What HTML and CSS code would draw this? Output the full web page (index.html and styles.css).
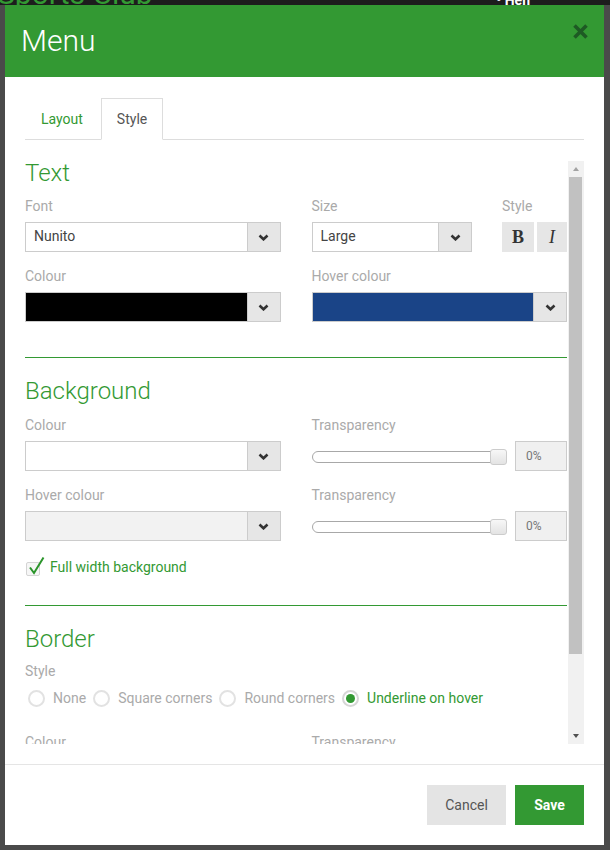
FILE: index.html
```html
<!DOCTYPE html>
<html lang="en">
<head>
    <meta charset="UTF-8">
    <meta name="viewport" content="width=device-width, initial-scale=1.0">
    <title>Sports Club - Menu style</title>
    <link rel="stylesheet" href="styles.css">
</head>
<body>
    <div class="site-head">
        <span class="site-name">Sports Club</span>
        <span class="site-nav">&bull; Hen</span>
    </div>

    <div class="modal">
        <div class="modal-header">
            <h2>Menu</h2>
            <button class="close" type="button" aria-label="Close">
                <svg width="17" height="17" viewBox="0 0 17 17">
                    <path d="M2.5 2.5 L14.5 14.5 M14.5 2.5 L2.5 14.5" stroke="currentColor" stroke-width="3.6" fill="none"/>
                </svg>
            </button>
        </div>

        <div class="modal-body">
            <ul class="tabs">
                <li><a href="#">Layout</a></li>
                <li class="active"><a href="#">Style</a></li>
            </ul>

            <div class="scroll">
                <div class="pane">
                    <!-- Text -->
                    <h3 class="section-title">Text</h3>
                    <div class="form-row">
                        <div class="field">
                            <div class="field-label">Font</div>
                            <div class="select">
                                <span class="select-value">Nunito</span>
                                <span class="select-caret"><svg width="11" height="7" viewBox="0 0 11 7"><path d="M1.5 1.5 L5.5 5.3 L9.5 1.5" stroke="#333" stroke-width="2.6" fill="none"/></svg></span>
                            </div>
                        </div>
                        <div class="pair">
                            <div class="field grow">
                                <div class="field-label">Size</div>
                                <div class="select">
                                    <span class="select-value">Large</span>
                                    <span class="select-caret"><svg width="11" height="7" viewBox="0 0 11 7"><path d="M1.5 1.5 L5.5 5.3 L9.5 1.5" stroke="#333" stroke-width="2.6" fill="none"/></svg></span>
                                </div>
                            </div>
                            <div class="field style-field">
                                <div class="field-label">Style</div>
                                <div class="style-btns">
                                    <span class="style-btn bold">B</span>
                                    <span class="style-btn italic">I</span>
                                </div>
                            </div>
                        </div>
                    </div>
                    <div class="form-row">
                        <div class="field">
                            <div class="field-label">Colour</div>
                            <div class="select">
                                <span class="select-value swatch-black"></span>
                                <span class="select-caret"><svg width="11" height="7" viewBox="0 0 11 7"><path d="M1.5 1.5 L5.5 5.3 L9.5 1.5" stroke="#333" stroke-width="2.6" fill="none"/></svg></span>
                            </div>
                        </div>
                        <div class="field">
                            <div class="field-label">Hover colour</div>
                            <div class="select">
                                <span class="select-value swatch-blue"></span>
                                <span class="select-caret"><svg width="11" height="7" viewBox="0 0 11 7"><path d="M1.5 1.5 L5.5 5.3 L9.5 1.5" stroke="#333" stroke-width="2.6" fill="none"/></svg></span>
                            </div>
                        </div>
                    </div>

                    <hr class="divider">

                    <!-- Background -->
                    <h3 class="section-title">Background</h3>
                    <div class="form-row roomy">
                        <div class="field">
                            <div class="field-label">Colour</div>
                            <div class="select">
                                <span class="select-value"></span>
                                <span class="select-caret"><svg width="11" height="7" viewBox="0 0 11 7"><path d="M1.5 1.5 L5.5 5.3 L9.5 1.5" stroke="#333" stroke-width="2.6" fill="none"/></svg></span>
                            </div>
                        </div>
                        <div class="field">
                            <div class="field-label">Transparency</div>
                            <div class="slider-row">
                                <div class="slider"><span class="slider-thumb"></span></div>
                                <span class="slider-value">0%</span>
                            </div>
                        </div>
                    </div>
                    <div class="form-row">
                        <div class="field">
                            <div class="field-label">Hover colour</div>
                            <div class="select disabled">
                                <span class="select-value"></span>
                                <span class="select-caret"><svg width="11" height="7" viewBox="0 0 11 7"><path d="M1.5 1.5 L5.5 5.3 L9.5 1.5" stroke="#333" stroke-width="2.6" fill="none"/></svg></span>
                            </div>
                        </div>
                        <div class="field">
                            <div class="field-label">Transparency</div>
                            <div class="slider-row">
                                <div class="slider"><span class="slider-thumb"></span></div>
                                <span class="slider-value">0%</span>
                            </div>
                        </div>
                    </div>
                    <label class="check">
                        <span class="check-box">
                            <svg class="check-mark" width="17" height="19" viewBox="0 0 17 19"><path d="M2 11.5 L6 17 L15.5 1.5" stroke="#2b952b" stroke-width="2" fill="none"/></svg>
                        </span>
                        Full width background
                    </label>

                    <hr class="divider bg-end">

                    <!-- Border -->
                    <h3 class="section-title">Border</h3>
                    <div class="field-label spaced">Style</div>
                    <div class="radios">
                        <label class="radio"><span class="radio-dot"></span>None</label>
                        <label class="radio"><span class="radio-dot"></span>Square corners</label>
                        <label class="radio"><span class="radio-dot"></span>Round corners</label>
                        <label class="radio checked"><span class="radio-dot"></span>Underline on hover</label>
                    </div>
                    <div class="form-row last">
                        <div class="field">
                            <div class="field-label">Colour</div>
                        </div>
                        <div class="field">
                            <div class="field-label">Transparency</div>
                        </div>
                    </div>
                </div>

                <div class="scrollbar">
                    <span class="scroll-btn up"></span>
                    <div class="scroll-track"><div class="scroll-thumb"></div></div>
                    <span class="scroll-btn down"></span>
                </div>
            </div>
        </div>

        <div class="modal-footer">
            <button class="btn btn-cancel" type="button">Cancel</button>
            <button class="btn btn-save" type="button">Save</button>
        </div>
    </div>
</body>
</html>
```

FILE: styles.css
```css
* {
    box-sizing: border-box;
}

body {
    margin: 0;
    height: 850px;
    overflow: hidden;
    font-family: 'Roboto', 'Liberation Sans', sans-serif;
    font-size: 14px;
    line-height: 20px;
    color: #555;
    background-color: #4a4a4a;
}

/* page behind the dialog */
.site-head {
    height: 5px;
    overflow: hidden;
    display: flex;
    align-items: flex-end;
    justify-content: space-between;
    padding-right: 80px;
    background-color: #1d1d1d;
}

.site-name {
    color: #339933;
    font-size: 30px;
    line-height: 22px;
    white-space: nowrap;
    margin-left: -3px;
}

.site-nav {
    color: #fff;
    font-weight: bold;
    line-height: 10px;
}

/* dialog */
.modal {
    position: absolute;
    top: 5px;
    left: 5px;
    width: 599px;
    height: 840px;
    display: flex;
    flex-direction: column;
    background-color: #fff;
}

.modal-header {
    position: relative;
    height: 73px;
    padding: 0 16px;
    display: flex;
    align-items: center;
    background-color: #339933;
}

.modal-header h2 {
    margin: 0;
    font-size: 30px;
    line-height: 34px;
    font-weight: 300;
    color: #fff;
}

.close {
    position: absolute;
    top: 18px;
    right: 15px;
    width: 17px;
    height: 17px;
    padding: 0;
    border: none;
    background: none;
    color: #1e5a24;
    cursor: pointer;
}

.close svg {
    display: block;
}

.modal-body {
    padding: 21px 20px 20px;
}

/* tabs */
.tabs {
    list-style: none;
    margin: 0;
    padding: 0;
    display: flex;
    border-bottom: 1px solid #ddd;
}

.tabs li {
    margin-bottom: -1px;
    margin-right: 2px;
}

.tabs a {
    display: block;
    padding: 10px 15px;
    line-height: 20px;
    border: 1px solid transparent;
    color: #339933;
    text-decoration: none;
}

.tabs .active a {
    color: #555;
    background-color: #fff;
    border-color: #ddd #ddd transparent;
}

/* scrolling area */
.scroll {
    display: flex;
    gap: 1px;
    height: 585px;
    margin-top: 19px;
}

.pane {
    width: 542px;
    overflow: hidden;
}

.scrollbar {
    width: 16px;
    margin-top: 2px;
    display: flex;
    flex-direction: column;
    background-color: #f1f1f1;
}

.scroll-btn {
    height: 16px;
    display: flex;
    align-items: center;
    justify-content: center;
}

.scroll-btn::before {
    content: '';
    border-left: 3.5px solid transparent;
    border-right: 3.5px solid transparent;
}

.scroll-btn.up::before {
    border-bottom: 4px solid #a3a3a3;
}

.scroll-btn.down::before {
    border-top: 4px solid #505050;
}

.scroll-track {
    flex: 1;
    padding: 0 2px 0 1px;
}

.scroll-thumb {
    height: 477px;
    background-color: #c1c1c1;
}

/* form */
.section-title {
    margin: 0;
    font-size: 24px;
    line-height: 28px;
    font-weight: 300;
    color: #339933;
}

.form-row {
    display: grid;
    grid-template-columns: 1fr 1fr;
    column-gap: 31px;
    margin-top: 14px;
}

.section-title + .form-row {
    margin-top: 9px;
}

.field-label.spaced {
    margin-top: 8px;
}

.section-title + .form-row.roomy {
    margin-top: 10px;
}

.form-row.last {
    margin-top: 23px;
}

.field-label {
    line-height: 20px;
    margin-bottom: 6px;
    color: #aaa;
}

.pair {
    display: flex;
    gap: 30px;
}

.grow {
    flex: 1;
}

.style-field {
    width: 65px;
}

.select {
    display: flex;
    height: 30px;
    border: 1px solid #ccc;
    background-color: #fff;
}

.select.disabled {
    background-color: #f2f2f2;
}

.select-value {
    flex: 1;
    padding: 0 8px;
    line-height: 27px;
    color: #444;
}

.swatch-black {
    background-color: #000;
}

.swatch-blue {
    background-color: #1a4487;
}

.select-caret {
    width: 33px;
    display: flex;
    align-items: center;
    justify-content: center;
    border-left: 1px solid #ccc;
    background-color: #e6e6e6;
}

.style-btns {
    display: flex;
    gap: 3px;
}

.style-btn {
    width: 30px;
    height: 30px;
    display: flex;
    align-items: center;
    justify-content: center;
    font-family: 'Liberation Serif', serif;
    font-size: 18px;
    color: #333;
    background-color: #e6e6e6;
}

.style-btn.bold {
    width: 32px;
    font-weight: bold;
}

.style-btn.italic {
    font-style: italic;
}

/* transparency slider */
.slider-row {
    display: flex;
    align-items: center;
    gap: 8px;
    height: 30px;
}

.slider {
    position: relative;
    flex: 1;
    height: 12px;
    margin-top: 1px;
    border: 1px solid #a8a8a8;
    border-radius: 6px;
    background-color: #fff;
}

.slider-thumb {
    position: absolute;
    top: -3px;
    right: -1px;
    width: 17px;
    height: 16px;
    border: 1px solid #ccc;
    border-radius: 3px;
    background: linear-gradient(#f7f7f7, #e3e3e3);
}

.slider-value {
    width: 52px;
    height: 30px;
    padding-left: 10px;
    border: 1px solid #ccc;
    background-color: #f0f0f0;
    color: #777;
    font-size: 12px;
    line-height: 28px;
}

/* checkbox */
.check {
    display: flex;
    align-items: center;
    gap: 10px;
    height: 20px;
    margin-top: 16px;
    color: #339933;
}

.check-box {
    position: relative;
    width: 14px;
    height: 14px;
    margin: 4px 0 0 1px;
    border: 1px solid #d4d4d4;
    border-radius: 2px;
    background-color: #f6f6f6;
}

.check-mark {
    position: absolute;
    left: 1px;
    top: -7px;
}

/* radios */
.radios {
    display: flex;
    align-items: center;
    gap: 4px;
    height: 22px;
    margin-top: 5px;
}

.radio {
    display: flex;
    align-items: center;
    gap: 8px;
    color: #aaa;
}

.radio-dot {
    position: relative;
    width: 17px;
    height: 17px;
    margin-left: 3px;
    border: 2px solid #e2e2e2;
    border-radius: 50%;
}

.radio.checked {
    color: #339933;
}

.radio.checked .radio-dot {
    border-color: #d6d6d6;
}

.radio.checked .radio-dot::after {
    content: '';
    position: absolute;
    top: 2px;
    left: 2px;
    width: 9px;
    height: 9px;
    border-radius: 50%;
    background-color: #339933;
}

.divider {
    height: 1px;
    margin: 35px 0 19px;
    border: none;
    background-color: #339933;
}

.divider.bg-end {
    margin-top: 28px;
}

/* footer */
.modal-footer {
    display: flex;
    justify-content: flex-end;
    gap: 9px;
    padding: 20px;
    border-top: 1px solid #e5e5e5;
}

.btn {
    height: 40px;
    border: none;
    font-family: inherit;
    font-size: 14px;
    cursor: pointer;
}

.btn-cancel {
    width: 79px;
    color: #555;
    background-color: #e4e4e4;
}

.btn-save {
    width: 69px;
    color: #fff;
    font-weight: bold;
    background-color: #339933;
}
```
